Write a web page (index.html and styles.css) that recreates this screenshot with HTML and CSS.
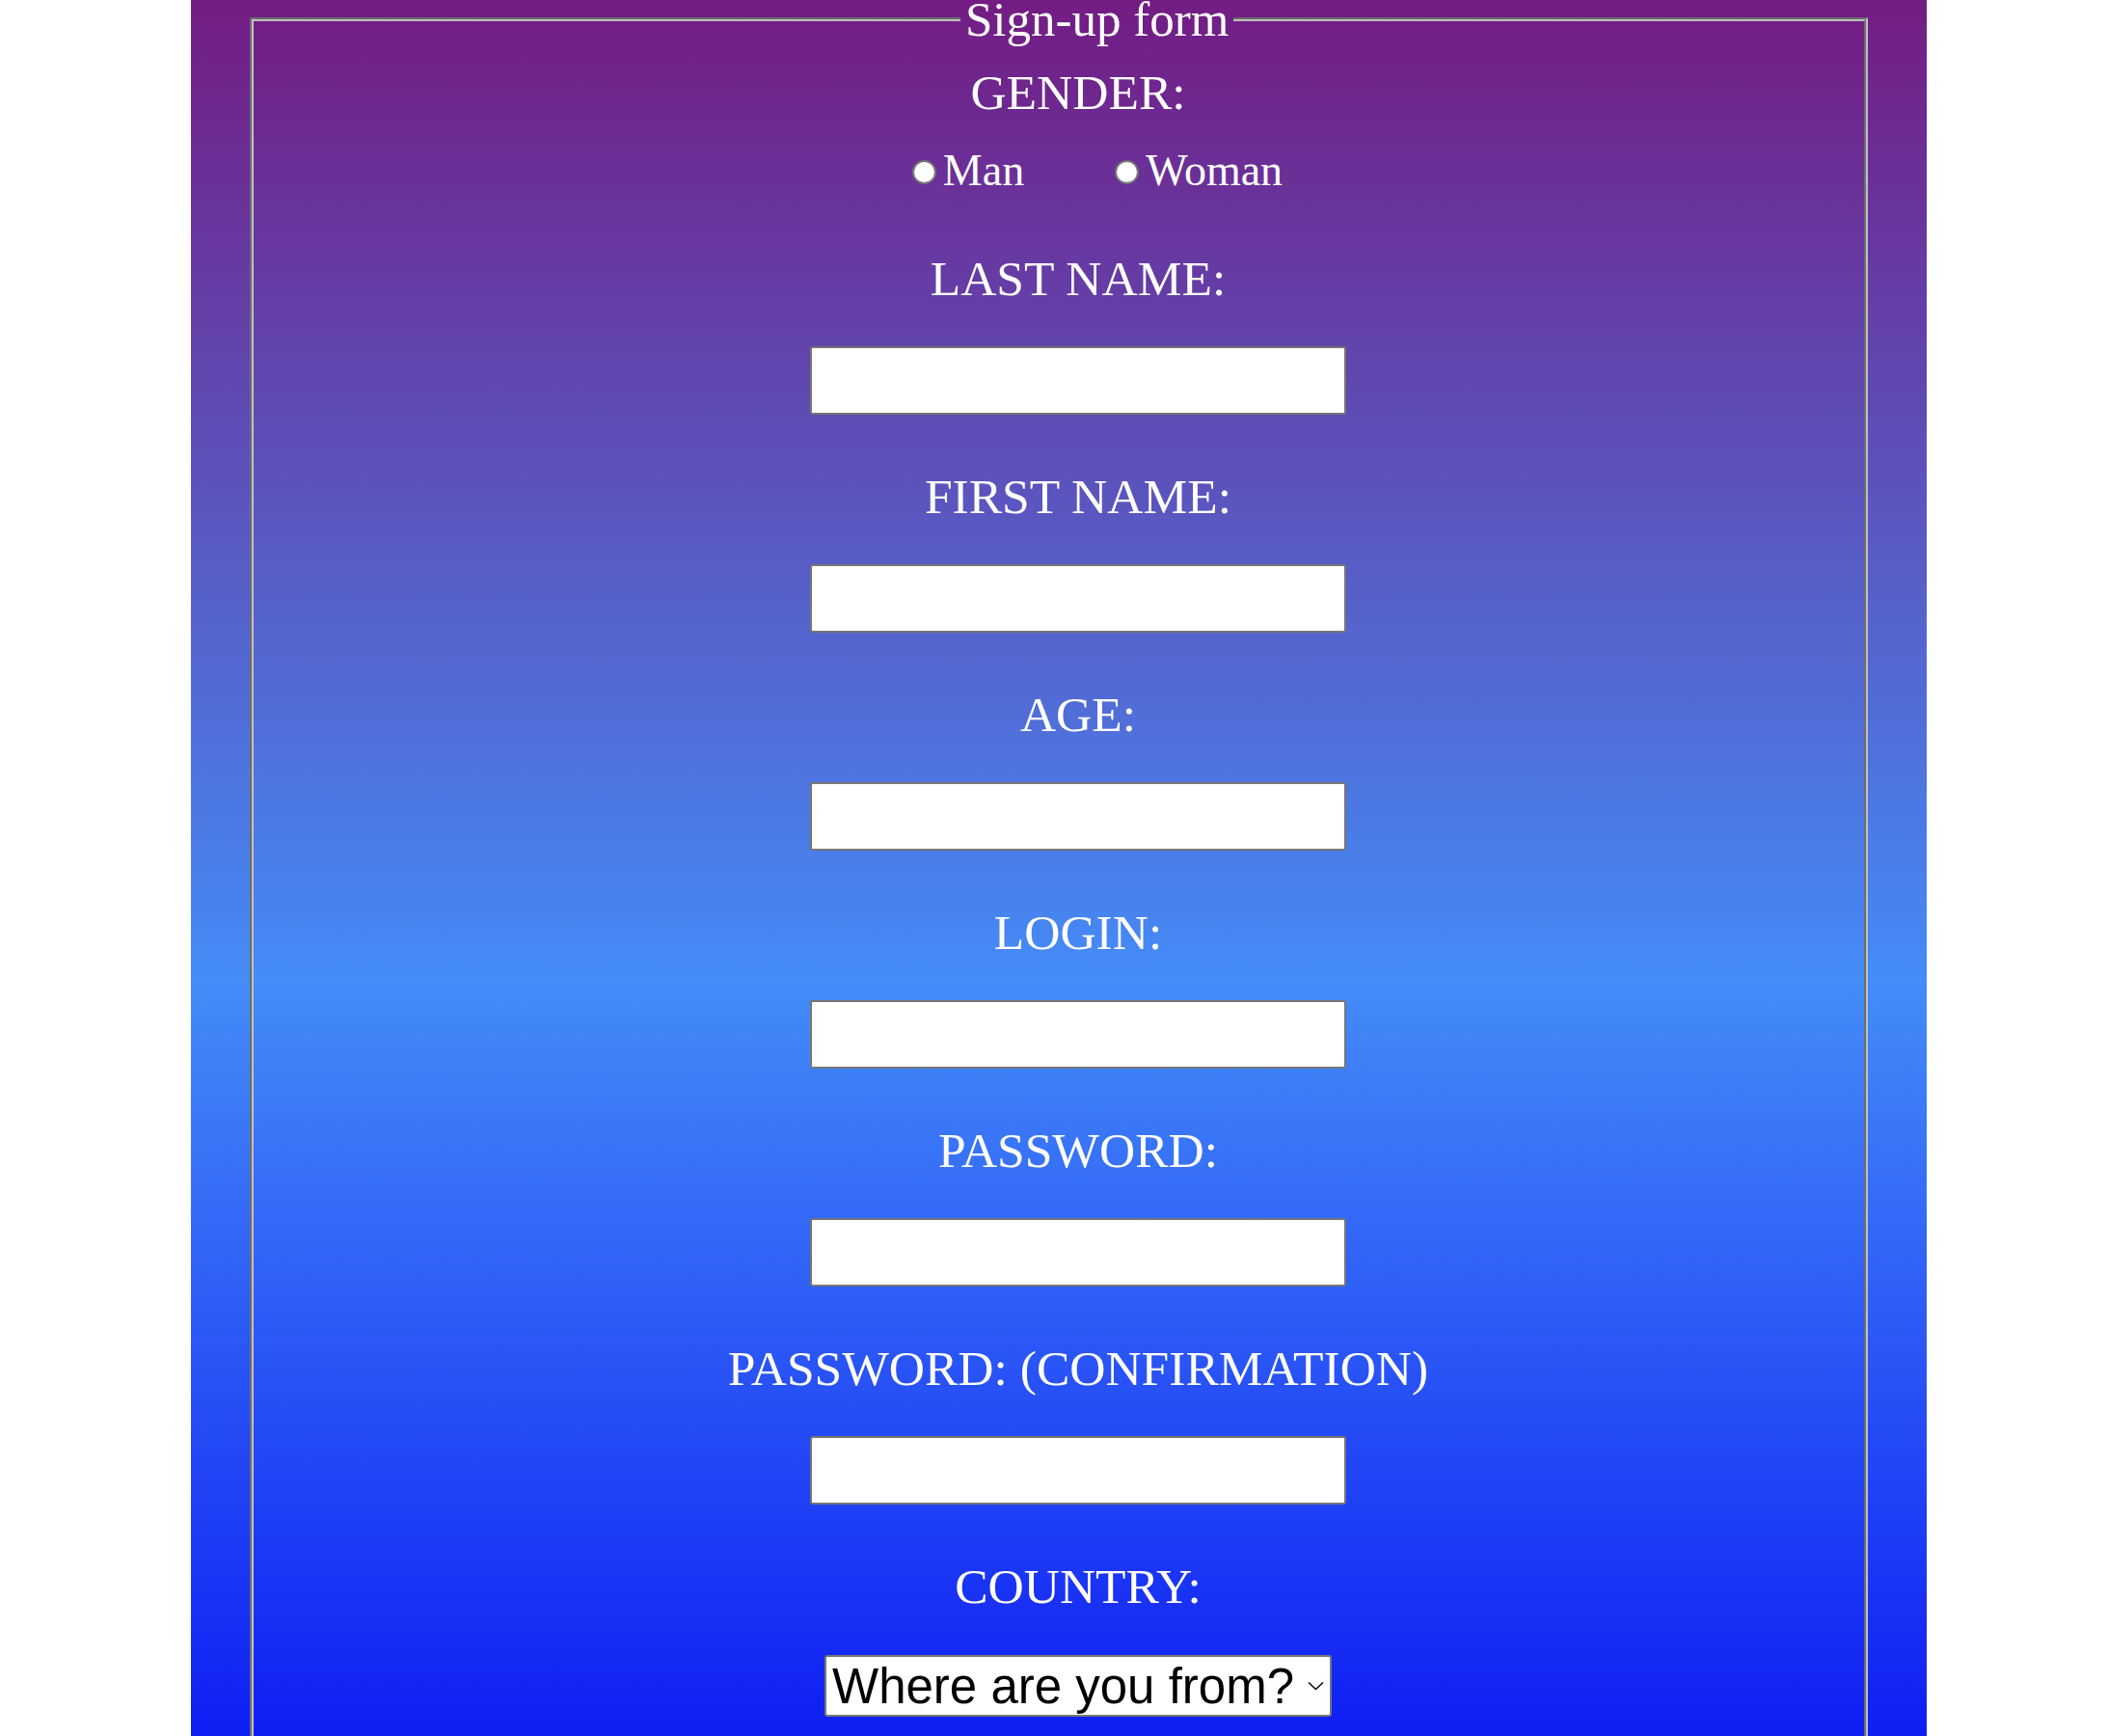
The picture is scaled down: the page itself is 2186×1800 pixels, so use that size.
FILE: index.html
```html
<!DOCTYPE html>
<html lang="en">
<head>
<meta charset="utf-8">
<title>Sign-up form</title>
<link rel="stylesheet" href="styles.css">
</head>
<body>
<main class="page">
  <form class="signup" action="#">
    <fieldset class="box">
      <legend class="box-title">Sign-up form</legend>
      <div class="fields">
        <p class="label">GENDER:</p>
        <div class="gender">
          <label class="choice"><input type="radio" name="gender" class="radio">Man</label>
          <label class="choice"><input type="radio" name="gender" class="radio">Woman</label>
        </div>

        <label class="label" for="lastname">LAST NAME:</label>
        <input class="field" id="lastname" type="text">

        <label class="label" for="firstname">FIRST NAME:</label>
        <input class="field" id="firstname" type="text">

        <label class="label" for="age">AGE:</label>
        <input class="field" id="age" type="text">

        <label class="label" for="login">LOGIN:</label>
        <input class="field" id="login" type="text">

        <label class="label" for="password">PASSWORD:</label>
        <input class="field" id="password" type="password">

        <label class="label" for="password2">PASSWORD: (CONFIRMATION)</label>
        <input class="field" id="password2" type="password">

        <label class="label" for="country">COUNTRY:</label>
        <span class="select-wrap">
          <select class="select" id="country">
            <option>Where are you from?</option>
            <option>France</option>
            <option>Belgium</option>
            <option>Switzerland</option>
            <option>Canada</option>
          </select>
          <svg class="chevron" width="17" height="10" viewBox="0 0 17 10" aria-hidden="true">
            <polyline points="1,1.5 8.5,8.5 16,1.5" fill="none" stroke="#000" stroke-width="1.4"/>
          </svg>
        </span>
      </div>
    </fieldset>
  </form>
</main>
</body>
</html>
```

FILE: styles.css
```css
html, body {
  margin: 0;
  padding: 0;
  background: #ffffff;
}

body {
  font-family: "Liberation Serif", "Times New Roman", serif;
}

.page {
  width: 1800px;
  height: 1800px;
  margin: 0 188px 0 198px;
  overflow: hidden;
  background: linear-gradient(to bottom, #731c83 0px, #448cf8 1018px, #0f1ef4 1800px);
}

.signup {
  margin: 0;
  padding-top: 2px;
}

.box {
  margin: 0 61px;
  padding: 0 0 60px 40px;
  border: 4px groove #c0c0c0;
  min-width: 0;
}

.box-title {
  margin-left: 693px;
  padding: 0 5px;
  font-size: 51px;
  line-height: 36px;
  color: #ffffff;
}

.fields {
  display: flex;
  flex-direction: column;
  align-items: center;
  padding-top: 28px;
}

.label {
  display: block;
  margin: 0;
  font-size: 51.5px;
  line-height: 60px;
  color: #ffffff;
  white-space: nowrap;
}

.gender {
  display: flex;
  align-items: center;
  margin: 24px 0 0 40px;
  height: 53px;
}

.choice {
  display: flex;
  align-items: center;
  font-size: 46px;
  line-height: 53px;
  color: #ffffff;
}

.choice + .choice {
  margin-left: 94px;
}

.radio {
  appearance: none;
  -webkit-appearance: none;
  box-sizing: border-box;
  width: 25px;
  height: 25px;
  margin: 3px 7px 0 0;
  border: 2px solid #767676;
  border-radius: 50%;
  background: #ffffff;
}

.gender + .label {
  margin-top: 56px;
}

.field {
  box-sizing: border-box;
  width: 556px;
  height: 71px;
  margin: 40px 0 0;
  border: 2px solid #767676;
  border-radius: 3px;
  background: #ffffff;
  font-size: 40px;
  padding: 0 8px;
}

.field + .label {
  margin-top: 55px;
}

.select-wrap {
  position: relative;
  display: inline-block;
  margin-top: 41px;
}

.select {
  appearance: none;
  -webkit-appearance: none;
  box-sizing: border-box;
  display: block;
  width: 526px;
  height: 64px;
  margin: 0;
  padding: 0 30px 0 6px;
  border: 2px solid #767676;
  border-radius: 3px;
  background: #ffffff;
  color: #000000;
  font-family: "Liberation Sans", Arial, sans-serif;
  font-size: 51px;
  line-height: normal;
}

.chevron {
  position: absolute;
  right: 8px;
  top: 27px;
  pointer-events: none;
}
```
